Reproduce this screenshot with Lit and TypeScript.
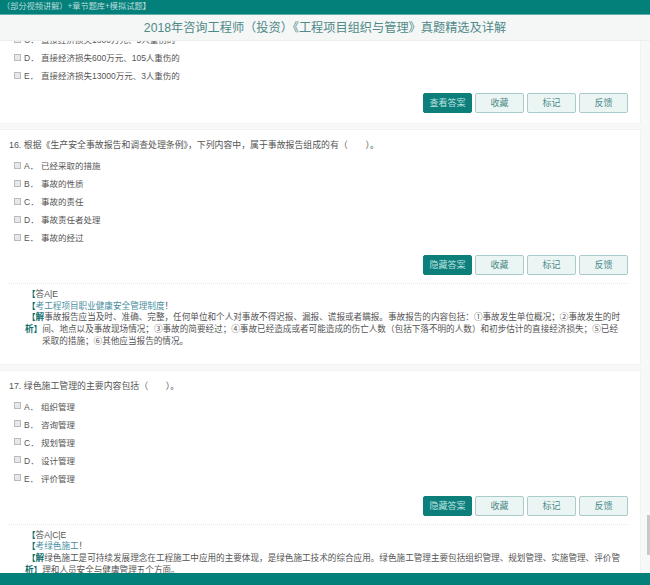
import { LitElement, html, css } from "lit";
import { customElement } from "lit/decorators.js";

const BTN = ["收藏", "标记", "反馈"];

@customElement("app-root")
export class AppRoot extends LitElement {
  static styles = css`
    :host {
      display: block;
      width: 650px;
      height: 585px;
      overflow: hidden;
      position: relative;
      background: #fff;
      font-family: "Liberation Sans", "Noto Sans CJK SC", sans-serif;
      color: #555;
    }
    .top {
      height: 15px;
      background: #04807a;
      color: #b9dcda;
      font-size: 8.2px;
      line-height: 14px;
      white-space: nowrap;
      padding-left: 2px;
      box-sizing: border-box;
      border-bottom: 1px solid #5fb0ac;
    }
    .title {
      height: 26px;
      background: #f5f6f6;
      color: #4e8a88;
      font-size: 12.2px;
      line-height: 26px;
      text-align: center;
      border-bottom: 1px solid #eee;
      box-sizing: border-box;
    }
    .main {
      height: 544px;
      overflow: hidden;
      display: flex;
      background: #f8f8f8;
    }
    .col {
      width: 640px;
      flex: none;
      display: flex;
      flex-direction: column;
      gap: 7px;
    }
    .card {
      flex: none;
      background: #fff;
      padding: 0 12px 0 9px;
      box-shadow: 0 0 0 1px #f2f2f2;
    }
    .first {
      height: 82px;
      overflow: hidden;
    }
    .first .opts { margin-top: -11px; }
    .q {
      font-size: 8.9px;
      padding-top: 3px;
      height: 23px;
      line-height: 24px;
      white-space: nowrap;
    }
    .opts {
      display: flex;
      flex-direction: column;
      padding-left: 5px;
    }
    .opt {
      height: 18px;
      display: flex;
      align-items: center;
      font-size: 8.5px;
      white-space: nowrap;
    }
    .box {
      width: 5px;
      height: 5px;
      border: 1px solid #bbb;
      background: #e8e8e8;
      margin-right: 3px;
    }
    .letter { width: 17px; }
    .btns {
      display: flex;
      justify-content: flex-end;
      gap: 3px;
      height: 20px;
      margin: 9px 0 8px;
    }
    .btn {
      width: 49px;
      height: 20px;
      box-sizing: border-box;
      border: 1px solid #a9cbc9;
      background: #eaf5f4;
      color: #4e8a88;
      font-size: 9px;
      line-height: 18px;
      text-align: center;
      border-radius: 2px;
    }
    .btn.on {
      background: #0d7f7b;
      border-color: #0d7f7b;
      color: #bfe2e0;
    }
    .ans {
      border-top: 1px dotted #e6e6e6;
      padding: 5px 0 16px 18px;
      font-size: 8.6px;
      line-height: 11.7px;
    }
    .ans div { white-space: nowrap; }
    .k { color: #0a6d6a; font-weight: bold; }
    .t { color: #4a8fa0; }
    .ind { padding-left: 15px; }
    .out { margin-left: -2px; }
    .bar {
      width: 10px;
      flex: none;
      position: relative;
    }
    .thumb {
      position: absolute;
      left: 7px;
      right: 0;
      top: 474px;
      height: 40px;
      background: #c8c8c8;
    }
    .bottom {
      position: absolute;
      left: 0;
      right: 0;
      bottom: 0;
      height: 12px;
      background: #04807a;
    }
  `;

  private buttons(main: string) {
    return html`<div class="btns">
      <div class="btn on">${main}</div>
      ${BTN.map((b) => html`<div class="btn">${b}</div>`)}
    </div>`;
  }

  private opts(items: string[][]) {
    return html`<div class="opts">
      ${items.map(
        ([l, t]) => html`<div class="opt"><span class="box"></span><span class="letter">${l}．</span>${t}</div>`
      )}
    </div>`;
  }

  render() {
    return html`
      <div class="top">（部分视频讲解）+章节题库+模拟试题】</div>
      <div class="title">2018年咨询工程师（投资）《工程项目组织与管理》真题精选及详解</div>
      <div class="main">
        <div class="col">
          <div class="card first">
            ${this.opts([
              ["C", "直接经济损失1300万元、5人重伤的"],
              ["D", "直接经济损失600万元、105人重伤的"],
              ["E", "直接经济损失13000万元、3人重伤的"],
            ])}
            ${this.buttons("查看答案")}
          </div>
          <div class="card">
            <div class="q">16. 根据《生产安全事故报告和调查处理条例》，下列内容中，属于事故报告组成的有（　　）。</div>
            ${this.opts([
              ["A", "已经采取的措施"],
              ["B", "事故的性质"],
              ["C", "事故的责任"],
              ["D", "事故责任者处理"],
              ["E", "事故的经过"],
            ])}
            ${this.buttons("隐藏答案")}
            <div class="ans">
              <div><span class="k">【</span>答A|E</div>
              <div><span class="k">【</span><span class="t">考工程项目职业健康安全管理制度</span>！</div>
              <div><span class="k">【解</span>事故报告应当及时、准确、完整，任何单位和个人对事故不得迟报、漏报、谎报或者瞒报。事故报告的内容包括：①事故发生单位概况；②事故发生的时</div>
              <div class="out"><span class="k">析】</span>间、地点以及事故现场情况；③事故的简要经过；④事故已经造成或者可能造成的伤亡人数（包括下落不明的人数）和初步估计的直接经济损失；⑤已经</div>
              <div class="ind">采取的措施；⑥其他应当报告的情况。</div>
            </div>
          </div>
          <div class="card">
            <div class="q">17. 绿色施工管理的主要内容包括（　　）。</div>
            ${this.opts([
              ["A", "组织管理"],
              ["B", "咨询管理"],
              ["C", "规划管理"],
              ["D", "设计管理"],
              ["E", "评价管理"],
            ])}
            ${this.buttons("隐藏答案")}
            <div class="ans">
              <div><span class="k">【</span>答A|C|E</div>
              <div><span class="k">【</span><span class="t">考绿色施工</span>！</div>
              <div><span class="k">【解</span>绿色施工是可持续发展理念在工程施工中应用的主要体现，是绿色施工技术的综合应用。绿色施工管理主要包括组织管理、规划管理、实施管理、评价管</div>
              <div class="out"><span class="k">析】</span>理和人员安全与健康管理五个方面。</div>
            </div>
          </div>
        </div>
        <div class="bar"><div class="thumb"></div></div>
      </div>
      <div class="bottom"></div>
    `;
  }
}
